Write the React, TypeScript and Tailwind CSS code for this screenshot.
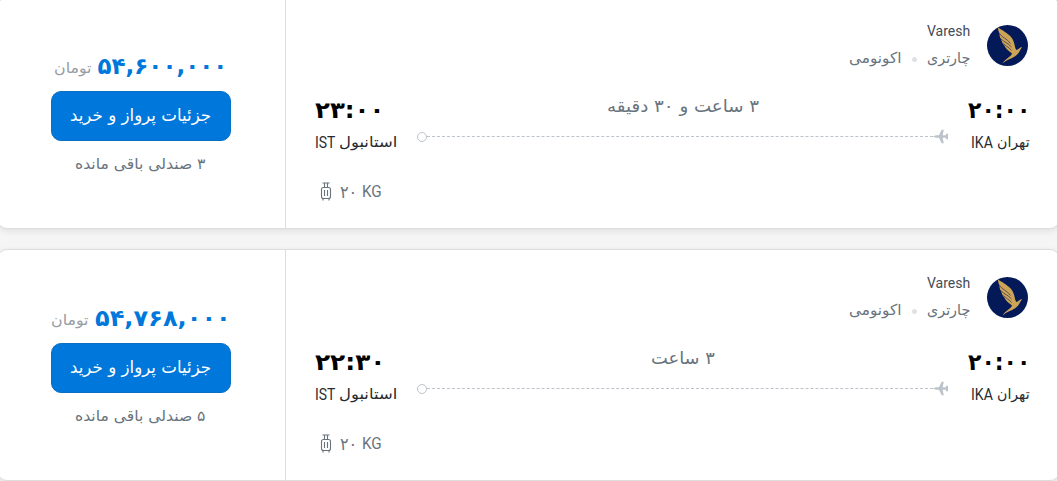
import { useLayoutEffect, useRef, useState } from 'react';

type FitProps = { text: string; width: number; className?: string; dir?: 'rtl' | 'ltr' };

/** One line of text, condensed or widened horizontally to a fixed measure. */
function Fit({ text, width, className = '', dir = 'rtl' }: FitProps) {
  const ref = useRef<HTMLSpanElement>(null);
  const [scale, setScale] = useState(1);
  useLayoutEffect(() => {
    if (ref.current) setScale(width / ref.current.offsetWidth);
  }, [text, width]);
  return (
    <span dir="ltr" className={`flex shrink-0 whitespace-nowrap ${className}`} style={{ width }}>
      <span ref={ref} dir={dir} className="inline-block shrink-0 origin-left" style={{ transform: `scaleX(${scale})` }}>
        {text}
      </span>
    </span>
  );
}

function Logo() {
  return (
    <svg width="41" height="41" viewBox="0 0 41 41">
      <circle cx="20.5" cy="20.5" r="20.5" fill="#041a58" />
      <path
        d="M11 2.5C17 6.5 23.5 9.5 26 15C28 19 27.5 22.5 29.3 25C31 25 32 22.5 35 22C33 25 32 28.5 28.5 31C24 34 19 35 15.5 38.5C19 33 24.5 31.5 25 28.5C22 26 19 24 17.3 20.5C15.5 18.5 14.5 16 14 14C12.5 11.5 12.5 10 12.6 8.5C11.5 6.5 11 4.5 11 2.5Z"
        fill="#cda355"
      />
      <path
        d="M13 9C15 12.5 20 13.5 23.5 18.5M14 13.8C17 17 21 18 24.5 22M16.5 18.5C19 21.5 22.5 22.5 24.5 25.5"
        stroke="#3d3d58"
        strokeWidth="0.8"
        fill="none"
      />
    </svg>
  );
}

function Plane() {
  return (
    <svg width="16" height="15" viewBox="0 0 16 15" fill="#bcc3ca" className="shrink-0">
      <path d="M0 7.5C1 6.5 3 6.2 6 6.2L8.6 0.7H10.8L9.6 6.2H13V4.8H15V10.2H13V8.8H9.6L10.8 14.3H8.6L6 8.8C3 8.8 1 8.5 0 7.5Z" />
    </svg>
  );
}

function Suitcase() {
  return (
    <svg width="12" height="19" viewBox="0 0 12 19" fill="none" stroke="#68737d" strokeWidth="1.1" className="shrink-0">
      <path d="M2.5 1H9.5M4.5 1V5M7.5 1V5M3.5 5.5H8.5Q10.5 5.5 10.5 7.5V14.5Q10.5 16.5 8.5 16.5H3.5Q1.5 16.5 1.5 14.5V7.5Q1.5 5.5 3.5 5.5ZM4.5 8V14M7.5 8V14M3 16.5V18.5M9 16.5V18.5" />
    </svg>
  );
}

type Flight = {
  price: string;
  priceWidth: number;
  seats: string;
  seatsWidth: number;
  arrival: string;
  arrivalWidth: number;
  duration: string;
  durationWidth: number;
};

const flights: Flight[] = [
  { price: '۵۴,۶۰۰,۰۰۰', priceWidth: 130, seats: '۳ صندلی باقی مانده', seatsWidth: 131, arrival: '۲۳:۰۰', arrivalWidth: 69, duration: '۳ ساعت و ۳۰ دقیقه', durationWidth: 152 },
  { price: '۵۴,۷۶۸,۰۰۰', priceWidth: 136, seats: '۵ صندلی باقی مانده', seatsWidth: 131, arrival: '۲۲:۳۰', arrivalWidth: 70, duration: '۳ ساعت', durationWidth: 64 },
];

function FlightCard({ f }: { f: Flight }) {
  return (
    <article className="flex h-[232px] shrink-0 overflow-hidden rounded-[10px] border border-[#dcdddd] bg-white shadow-[0_2px_6px_rgba(0,0,0,0.09)]">
      <aside className="flex w-[288px] shrink-0 flex-col items-center border-r border-[#dcdddd] pr-[2px] pt-[53px]">
        <div className="flex h-[30px] items-center gap-[6px]">
          <Fit text="تومان" width={38} className="pt-[4px] text-[15px] leading-[26px] text-[#969da3]" />
          <Fit text={f.price} width={f.priceWidth} className="text-[23px] font-bold leading-[30px] text-[#0077db]" />
        </div>
        <button className="mt-[10px] flex h-[50px] w-[180px] items-center justify-center rounded-[10px] border border-[#086fc3] bg-[#0077db] pb-[2px] text-white">
          <Fit text="جزئیات پرواز و خرید" width={141} className="text-[17px] leading-[30px]" />
        </button>
        <Fit text={f.seats} width={f.seatsWidth} className="mt-[10px] text-[15px] leading-[26px] text-[#68737d]" />
      </aside>
      <section className="flex min-w-0 flex-1 flex-col pl-[29px] pr-[29px] pt-[27px]">
        <header className="flex h-[41px] items-center justify-end gap-[17px] pr-[2px]">
          <div className="flex flex-col items-end pb-[2px]">
            <Fit text="Varesh" width={43} dir="ltr" className="font-['Roboto','DejaVu_Sans',sans-serif] text-[15px] leading-[27px] text-[#434c57]" />
            <div className="flex items-center">
              <Fit text="اکونومی" width={53} className="text-[15px] leading-[27px] text-[#68737d]" />
              <i className="ml-[10px] mr-[10px] mt-[2px] h-[5px] w-[5px] rounded-full bg-[#dfe2e5]" />
              <Fit text="چارتری" width={43} className="text-[15px] leading-[27px] text-[#68737d]" />
            </div>
          </div>
          <Logo />
        </header>
        <div className="mt-[27px] flex h-[64px]">
          <div className="flex w-[82px] shrink-0 flex-col">
            <Fit text={f.arrival} width={f.arrivalWidth} className="text-[23px] font-bold leading-[35px] text-black" />
            <div className="flex h-[30px] items-center justify-between text-[#252b31]">
              <Fit text="IST" width={20} dir="ltr" className="font-['Roboto',sans-serif] text-[16px]" />
              <Fit text="استانبول" width={58} className="text-[15px]" />
            </div>
          </div>
          <div className="ml-[20px] mr-[20px] flex min-w-0 flex-1 flex-col items-center">
            <Fit text={f.duration} width={f.durationWidth} className="text-[17px] leading-[27px] text-[#68737d]" />
            <div className="mt-[9px] flex h-[15px] w-full items-center">
              <i className="h-[10px] w-[10px] shrink-0 rounded-full border border-[#bcc3ca]" />
              <i className="h-0 flex-1 border-t border-dashed border-[#bcc3ca]" />
              <Plane />
            </div>
          </div>
          <div className="flex w-[61px] shrink-0 flex-col items-end">
            <Fit text="۲۰:۰۰" width={62} className="text-[23px] font-bold leading-[35px] text-black" />
            <div className="flex h-[30px] w-[59px] items-center justify-between text-[#252b31]">
              <Fit text="IKA" width={22} dir="ltr" className="font-['Roboto',sans-serif] text-[16px]" />
              <Fit text="تهران" width={33} className="text-[15px]" />
            </div>
          </div>
        </div>
        <div className="mt-[24px] flex h-[20px] items-center pl-[5px] text-[#68737d]">
          <Suitcase />
          <Fit text="۲۰" width={17} className="ml-[8px] pt-[2px] text-[17px] leading-[20px]" />
          <Fit text="KG" width={20} dir="ltr" className="ml-[5px] pt-[2px] font-['Roboto',sans-serif] text-[16px] leading-[20px]" />
        </div>
      </section>
    </article>
  );
}

export default function App() {
  return (
    <main className="h-[481px] w-[1057px] overflow-hidden bg-[#f5f5f5] font-['DejaVu_Sans',sans-serif]">
      <div className="-ml-[3px] -mt-[3px] flex w-[1063px] flex-col gap-[20px]">
        {flights.map((f) => (
          <FlightCard key={f.price} f={f} />
        ))}
      </div>
    </main>
  );
}
